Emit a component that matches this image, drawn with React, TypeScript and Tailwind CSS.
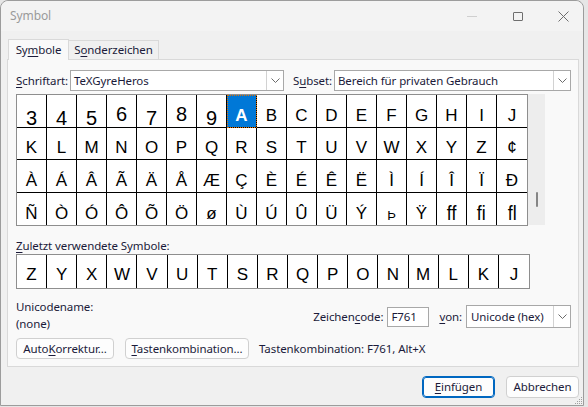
import clsx from "clsx";

const GRID = [
  ["3", "4", "5", "6", "7", "8", "9", "A", "B", "C", "D", "E", "F", "G", "H", "I", "J"],
  ["K", "L", "M", "N", "O", "P", "Q", "R", "S", "T", "U", "V", "W", "X", "Y", "Z", "¢"],
  ["À", "Á", "Â", "Ã", "Ä", "Å", "Æ", "Ç", "È", "É", "Ê", "Ë", "Ì", "Í", "Î", "Ï", "Ð"],
  ["Ñ", "Ò", "Ó", "Ô", "Õ", "Ö", "ø", "Ù", "Ú", "Û", "Ü", "Ý", "Þ", "Ÿ", "ff", "fi", "fl"],
];

const RECENT = ["Z", "Y", "X", "W", "V", "U", "T", "S", "R", "Q", "P", "O", "N", "M", "L", "K", "J"];

const DROP_DIGITS = ["3", "4", "5", "7", "9"];

const ui = "font-['Segoe_UI','Noto_Sans',sans-serif]";
const glyphFont = "font-['Liberation_Sans',Arial,sans-serif]";

function Chevron() {
  return (
    <svg width="9" height="5" viewBox="0 0 9 5" fill="none">
      <polyline points="0.5,0.5 4.5,4.5 8.5,0.5" stroke="#6b6b6b" strokeWidth="1" />
    </svg>
  );
}

function Combo({ value, width }: { value: string; width: string }) {
  return (
    <div className={clsx("h-[21px] bg-white border border-[#a8a8a8] flex items-stretch", width)}>
      <div className="flex-1 pl-[3px] flex items-center text-[#1b1b3a]">{value}</div>
      <div className="w-[17px] border-l border-[#d2d2d2] flex items-center justify-center">
        <Chevron />
      </div>
    </div>
  );
}

function Glyph({ ch }: { ch: string }) {
  if (/^[0-9]$/.test(ch)) {
    return (
      <span className={clsx("text-[20px] leading-none", DROP_DIGITS.includes(ch) ? "translate-y-[4px]" : "")}>
        {ch}
      </span>
    );
  }
  if (ch === "Þ") return <span className="text-[13px] leading-none">{ch}</span>;
  if (ch.length === 2)
    return <span className="text-[21px] leading-none scale-x-[0.85] translate-y-[1px]">{ch}</span>;
  return <span className="text-[17px] leading-none">{ch}</span>;
}

function Button({ children, width, primary }: { children: React.ReactNode; width: string; primary?: boolean }) {
  return (
    <div
      className={clsx(
        "h-[21px] rounded-[4px] bg-[#fdfdfd] flex items-center justify-center text-[#1b1b3a]",
        primary ? "border border-[#0067c0] outline outline-1 outline-[#0067c0] -outline-offset-2" : "border border-[#d0d0d0]",
        width
      )}
    >
      {children}
    </div>
  );
}

export default function App() {
  return (
    <div className={clsx("w-[588px] h-[407px] bg-[#e6e6e6] overflow-hidden text-[11.5px] tracking-[-0.1px]", ui)}>
      <div className="w-[584px] h-[406px] border border-[#9c9c9c] rounded-t-[8px] bg-[#f0f0f0] flex flex-col relative">
        {/* title bar */}
        <div className="h-[30px] flex items-center bg-[#f3f3f3] rounded-t-[8px]">
          <span className="ml-[9px] text-[12px] text-[#9a9a9a]">Symbol</span>
          <div className="ml-auto flex items-center">
            <div className="w-[10px] h-px bg-[#cfcfcf] mr-[36px]" />
            <div className="w-[10px] h-[9px] border border-[#6e6e6e] rounded-[1px] mr-[35px]" />
            <svg width="11" height="11" viewBox="0 0 11 11" className="mr-[14px]">
              <path d="M0.5 0.5 L10.5 10.5 M10.5 0.5 L0.5 10.5" stroke="#6e6e6e" strokeWidth="1" />
            </svg>
          </div>
        </div>

        {/* tabs */}
        <div className="mt-[8px] ml-[7px] flex items-end h-[20px] relative z-10 text-[#1b1b3a]">
          <div className="w-[61px] h-[21px] -mb-px border border-b-0 border-[#d9d9d9] bg-[#f9f9f9] flex items-center justify-center">
            <span>
              Sy<u className="underline-offset-2">m</u>bole
            </span>
          </div>
          <div className="w-[90px] h-[19px] border border-l-0 border-b-0 border-[#d9d9d9] bg-[#f0f0f0] flex items-center justify-center">
            <span>
              S<u className="underline-offset-2">o</u>nderzeichen
            </span>
          </div>
        </div>

        {/* panel */}
        <div className="ml-[6px] w-[572px] h-[308px] border border-[#d9d9d9] bg-[#f9f9f9] pl-[8px] pt-[10px] flex flex-col text-[#1b1b3a]">
          <div className="flex items-center h-[21px]">
            <div className="w-[54px]">
              <u className="underline-offset-2">S</u>chriftart:
            </div>
            <Combo value="TeXGyreHeros" width="w-[214px]" />
            <div className="ml-[9px] w-[41px]">
              S<u className="underline-offset-2">u</u>bset:
            </div>
            <Combo value="Bereich für privaten Gebrauch" width="w-[237px]" />
          </div>

          <div className="mt-[3px] flex">
            <div
              className={clsx(
                "grid grid-cols-[repeat(17,30px)] grid-rows-[33px_32px_33px_32px] border border-[#8e8e8e] bg-white text-black tracking-normal",
                glyphFont
              )}
            >
              {GRID.map((row, r) =>
                row.map((ch, c) => {
                  const selected = ch === "A";
                  return (
                    <div
                      key={`${r}-${c}`}
                      className={clsx(
                        "flex items-end justify-center pb-[3px] overflow-hidden",
                        c < 16 && "border-r border-r-black",
                        r < 3 && "border-b border-b-black",
                        selected && "bg-[#0078d7] text-white font-bold outline outline-1 outline-dotted outline-[#e07000] -outline-offset-1"
                      )}
                    >
                      {selected ? <span className="text-[17px] leading-none">A</span> : <Glyph ch={ch} />}
                    </div>
                  );
                })
              )}
            </div>
            <div className="w-[17px] h-[131px] bg-[#ededed] pt-[98px] flex justify-center">
              <div className="w-[2px] h-[15px] bg-[#858585] rounded-full" />
            </div>
          </div>

          <div className="mt-[12px] h-[16px] leading-[16px]">
            <u className="underline-offset-2">Z</u>uletzt verwendete Symbole:
          </div>
          <div
            className={clsx(
              "w-[514px] h-[35px] grid grid-cols-[repeat(17,1fr)] border border-[#8e8e8e] bg-white text-black tracking-normal",
              glyphFont
            )}
          >
            {RECENT.map((ch, i) => (
              <div
                key={i}
                className={clsx("flex items-end justify-center pb-[5px]", i < 16 && "border-r border-r-black")}
              >
                <span className="text-[17px] leading-none">{ch}</span>
              </div>
            ))}
          </div>

          <div className="mt-[9px] flex">
            <div className="flex flex-col leading-[17px]">
              <span>Unicodename:</span>
              <span>(none)</span>
            </div>
            <div className="ml-auto mr-[7px] mt-[7px] h-[23px] flex items-center">
              <span>
                Zeichen<u className="underline-offset-2">c</u>ode:
              </span>
              <div className="ml-[4px] w-[42px] h-[20px] bg-white border border-[#a8a8a8] flex items-center pl-[3px]">
                F761
              </div>
              <span className="ml-[10px]">
                <u className="underline-offset-2">v</u>on:
              </span>
              <div className="ml-[4px] w-[105px] h-[23px] bg-white border border-[#a8a8a8] flex items-stretch">
                <div className="flex-1 pl-[4px] flex items-center">Unicode (hex)</div>
                <div className="w-[17px] border-l border-[#d2d2d2] flex items-center justify-center">
                  <Chevron />
                </div>
              </div>
            </div>
          </div>

          <div className="mt-[6px] flex items-center">
            <Button width="w-[98px]">
              <span>
                Auto<u className="underline-offset-2">K</u>orrektur...
              </span>
            </Button>
            <div className="ml-[11px]">
              <Button width="w-[124px]">
                <span>
                  <u className="underline-offset-2">T</u>astenkombination...
                </span>
              </Button>
            </div>
            <span className="ml-[10px]">Tastenkombination: F761, Alt+X</span>
          </div>
        </div>

        {/* bottom buttons */}
        <div className="mt-[9px] flex justify-end pr-[4px] gap-[11px]">
          <Button width="w-[73px] h-[22px]" primary>
            <span>
              <u className="underline-offset-2">E</u>infügen
            </span>
          </Button>
          <Button width="w-[73px] h-[22px]">Abbrechen</Button>
        </div>

        <svg width="8" height="8" viewBox="0 0 8 8" className="absolute right-[0px] bottom-[0px]">
          <rect x="6" y="0" width="1" height="1" fill="#a0a0a0" />
          <rect x="4" y="2" width="1" height="1" fill="#a0a0a0" />
          <rect x="6" y="2" width="1" height="1" fill="#a0a0a0" />
          <rect x="2" y="4" width="1" height="1" fill="#a0a0a0" />
          <rect x="4" y="4" width="1" height="1" fill="#a0a0a0" />
          <rect x="6" y="4" width="1" height="1" fill="#a0a0a0" />
          <rect x="0" y="6" width="1" height="1" fill="#a0a0a0" />
          <rect x="2" y="6" width="1" height="1" fill="#a0a0a0" />
          <rect x="4" y="6" width="1" height="1" fill="#a0a0a0" />
          <rect x="6" y="6" width="1" height="1" fill="#a0a0a0" />
        </svg>
      </div>
    </div>
  );
}
